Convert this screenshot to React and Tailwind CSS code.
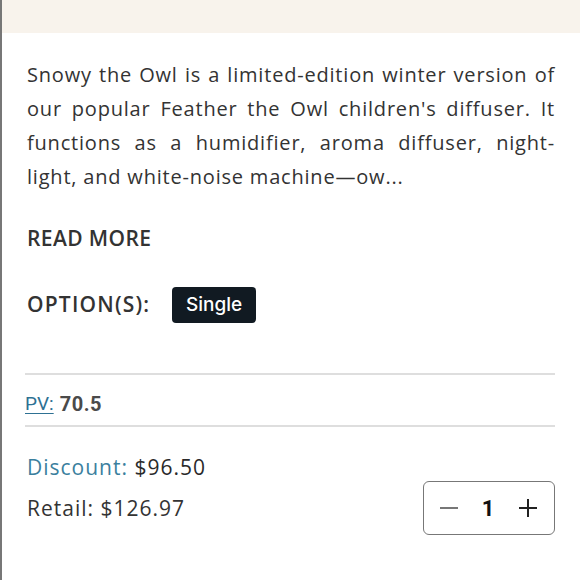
export default function App() {
  return (
    <div className="w-[580px] h-[580px] bg-white border-l-2 border-[#777] overflow-hidden">
      <div className="h-[33px] bg-[#f8f3ec]" />
      <div className="pl-[25px] pr-[25px]">
        <p className="mt-[25px] text-[20px] leading-[34px] text-[#333] text-justify font-['Open_Sans',sans-serif] font-normal tracking-[0.8px]">
          Snowy the Owl is a limited-edition winter version of our popular Feather the Owl children's diffuser. It functions as a humidifier, aroma diffuser, night-light, and white-noise machine—ow...
        </p>
        <div className="mt-[30px] text-[21px] leading-[28px] font-semibold text-[#333] font-['Open_Sans',sans-serif] tracking-[0.4px]">READ MORE</div>
        <div className="mt-[35px] flex items-center">
          <span className="text-[21px] font-semibold text-[#333] font-['Open_Sans',sans-serif] tracking-[1.2px] w-[145px]">OPTION(S):</span>
          <span className="h-[36px] px-[14px] flex items-center rounded-[4px] bg-[#111a22] text-white text-[19px] font-medium font-['Inter',sans-serif]">Single</span>
        </div>
        <div className="-ml-[2px]">
          <div className="mt-[50px] border-t-2 border-[#dedede]" />
          <div className="pt-[18px] pb-[10px] flex items-center gap-[6px] font-['Roboto',sans-serif] text-[20px] leading-[22px]">
            <span className="text-[#2e7193] text-[19px] underline underline-offset-[3px]">PV:</span>
            <span className="font-bold text-[#4a4a4a] tracking-[0.5px]">70.5</span>
          </div>
          <div className="border-t-2 border-[#dedede]" />
        </div>
        <div className="mt-[26px] text-[21px] leading-[28px] font-['Open_Sans',sans-serif] tracking-[1px]">
          <span className="text-[#3b7f9e]">Discount: </span>
          <span className="text-[#2a2a2a]">$96.50</span>
        </div>
        <div className="flex items-start justify-between">
          <div className="mt-[13px] text-[21px] leading-[28px] text-[#333] font-['Open_Sans',sans-serif] tracking-[1px]">Retail: $126.97</div>
          <div className="w-[132px] h-[54px] border border-[#777] rounded-[6px] flex items-center justify-center gap-[24px] font-['Roboto',sans-serif]">
            <span className="w-[18px] h-[2px] bg-[#777]" />
            <span className="text-[22px] font-bold text-[#111]">1</span>
            <svg width="20" height="20" viewBox="0 0 20 20"><path d="M10 1v18M1 10h18" stroke="#222" strokeWidth="2" /></svg>
          </div>
        </div>
      </div>
    </div>
  )
}
